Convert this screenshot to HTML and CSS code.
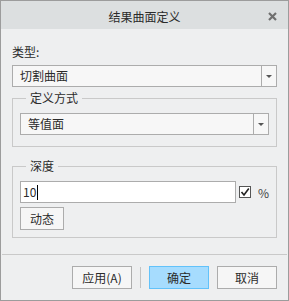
FILE: index.html
```html
<!DOCTYPE html>
<html lang="zh">
<head>
    <meta charset="UTF-8">
    <title>结果曲面定义</title>
    <link rel="stylesheet" href="styles.css">
</head>
<body>

    <div class="window">
        <!-- Title bar -->
        <div class="titlebar">
            <span class="title">结果曲面定义</span>
            <svg class="close" width="9" height="9" viewBox="0 0 9 9">
                <path d="M1 1 L8 8 M8 1 L1 8" stroke="#6f6f6f" stroke-width="2.2"/>
            </svg>
        </div>

        <div class="content">
            <div class="label">类型:</div>
            <div class="combo">
                <span class="combo-text">切割曲面</span>
                <span class="combo-btn"><span class="arrow"></span></span>
            </div>

            <fieldset class="group group-def">
                <legend>定义方式</legend>
                <div class="combo">
                    <span class="combo-text">等值面</span>
                    <span class="combo-btn"><span class="arrow"></span></span>
                </div>
            </fieldset>

            <fieldset class="group group-depth">
                <legend>深度</legend>
                <div class="depth-row">
                    <div class="input">10<span class="caret"></span></div>
                    <span class="check">
                        <svg width="10" height="10" viewBox="0 0 10 10">
                            <path d="M1.5 5 L4 8 L8.8 1.5" fill="none" stroke="#222" stroke-width="1.6"/>
                        </svg>
                    </span>
                    <span class="pct">%</span>
                </div>
                <button class="btn btn-small">动态</button>
            </fieldset>
        </div>

        <div class="separator"></div>

        <!-- Footer buttons -->
        <div class="footer">
            <button class="btn">应用(A)</button>
            <span class="vline"></span>
            <button class="btn btn-ok">确定</button>
            <button class="btn">取消</button>
        </div>
    </div>

</body>
</html>
```

FILE: styles.css
```css
body {
    margin: 0;
    padding: 0;
    background-color: #eeeff0;
    font-family: "Noto Sans CJK SC", "Liberation Sans", sans-serif;
    font-size: 12px;
    color: #2b2b2b;
}

.window {
    width: 289px;
    height: 301px;
    box-sizing: border-box;
    border: 1px solid #9c9c9c;
    background-color: #eeeff0;
}

/* Title bar */
.titlebar {
    height: 28px;
    background-color: #dcdfe0;
    display: flex;
    align-items: center;
    justify-content: center;
    position: relative;
}

.title {
    line-height: 16px;
    padding-top: 3px;
}

.close {
    position: absolute;
    right: 11px;
    top: 11px;
}

.content {
    padding: 0 11px;
}

.label {
    line-height: 16px;
    margin-top: 15px;
    margin-bottom: 5px;
}

/* Combo boxes */
.combo {
    height: 22px;
    box-sizing: border-box;
    border: 1px solid #acacac;
    background-color: #f7f7f7;
    display: flex;
    align-items: center;
}

.combo-text {
    flex: 1;
    padding-left: 7px;
    line-height: 16px;
}

.combo-btn {
    width: 14px;
    height: 20px;
    border-left: 1px solid #acacac;
    display: flex;
    align-items: center;
    justify-content: center;
}

.arrow {
    width: 0;
    height: 0;
    border-left: 3px solid transparent;
    border-right: 3px solid transparent;
    border-top: 3px solid #555;
}

/* Group boxes */
.group {
    margin: 0;
    border: 1px solid #c9c9c9;
    padding: 7px 7px 11px 7px;
    min-width: 0;
}

.group legend {
    padding: 0 4px;
    margin-left: 6px;
    line-height: 16px;
}

.group-def {
    margin-top: 3px;
}

.group-depth {
    margin-top: 11px;
    padding-bottom: 7px;
}

.depth-row {
    display: flex;
    align-items: center;
}

.input {
    width: 216px;
    height: 22px;
    box-sizing: border-box;
    border: 1px solid #acacac;
    background-color: #ffffff;
    padding-left: 2px;
    line-height: 20px;
    display: flex;
    align-items: center;
}

.caret {
    width: 1px;
    height: 15px;
    background-color: #000;
    margin-left: 1px;
}

.check {
    width: 12px;
    height: 12px;
    box-sizing: border-box;
    border: 1px solid #555;
    background-color: #fff;
    margin-left: 3px;
    display: flex;
    align-items: center;
    justify-content: center;
}

.pct {
    margin-left: 7px;
    color: #444;
}

/* Buttons */
.btn {
    width: 60px;
    height: 23px;
    box-sizing: border-box;
    border: 1px solid #acacac;
    background-color: #f6f6f6;
    font-family: "Noto Sans CJK SC", "Liberation Sans", sans-serif;
    font-size: 12px;
    color: #2b2b2b;
    padding: 0;
}

.btn-small {
    width: 44px;
    margin-top: 4px;
    display: block;
}

.btn-ok {
    background-color: #a6dcfe;
    border-color: #62c2fa;
}

.separator {
    height: 1px;
    background-color: #c9c9c9;
    margin: 16px 1px 0 1px;
}

.footer {
    display: flex;
    align-items: center;
    justify-content: flex-end;
    gap: 8px;
    padding: 11px 11px 0 0;
}

.vline {
    width: 1px;
    height: 21px;
    background-color: #c4c4c4;
}
```
